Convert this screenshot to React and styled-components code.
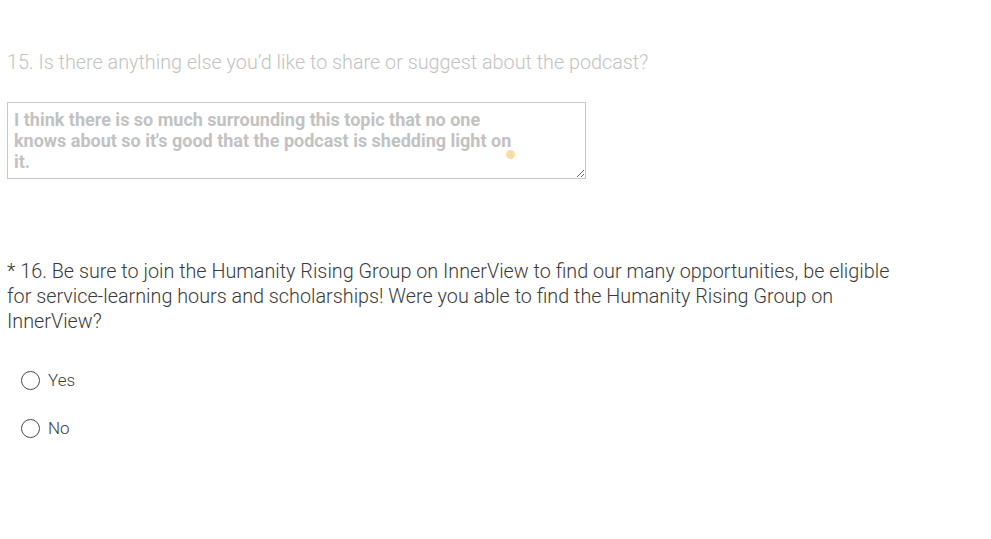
import React from 'react';
import styled, { createGlobalStyle } from 'styled-components';

const GlobalStyle = createGlobalStyle`
  html, body {
    margin: 0;
    padding: 0;
    background: #ffffff;
  }
  body {
    font-family: Roboto, "Liberation Sans", sans-serif;
  }
`;

const Page = styled.div`
  width: 991px;
  height: 539px;
  box-sizing: border-box;
  padding: 50px 0 0 7px;
  overflow: hidden;
`;

const Question = styled.div`
  margin-bottom: ${p => p.gap || 0}px;
`;

const Title = styled.div`
  font-size: 19.8px;
  font-weight: 300;
  line-height: 25px;
  color: ${p => (p.muted ? '#c3c3c3' : '#3b3b3b')};
  max-width: 900px;
  margin-bottom: ${p => p.below}px;
`;

const AnswerBox = styled.div`
  position: relative;
  width: 579px;
`;

const TextArea = styled.textarea`
  display: block;
  width: 579px;
  height: 77px;
  box-sizing: border-box;
  border: 1px solid #c9c9c9;
  border-radius: 0;
  padding: 6px 56px 0 6px;
  margin: 0;
  font-family: Roboto, "Liberation Sans", sans-serif;
  font-size: 18px;
  font-weight: 700;
  line-height: 21px;
  color: #c2c2c2;
  resize: vertical;
  background: #fff;
  outline: none;
  overflow: hidden;
`;

const Dot = styled.span`
  position: absolute;
  left: 499px;
  top: 48px;
  width: 9px;
  height: 9px;
  border-radius: 50%;
  background: #fcdca5;
`;

const Options = styled.div`
  display: flex;
  flex-direction: column;
  gap: 24px;
  padding-left: 14px;
`;

const Option = styled.label`
  display: flex;
  align-items: center;
  gap: 8px;
  height: 24px;
  font-size: 17px;
  font-weight: 300;
  color: #3b3b3b;
  cursor: pointer;
`;

const Circle = styled.span`
  width: 19px;
  height: 19px;
  border: 1.5px solid #4a4a4a;
  border-radius: 50%;
  box-sizing: border-box;
  flex: none;
`;

export default function App() {
  return (
    <>
      <GlobalStyle />
      <Page>
        <Question gap={80}>
          <Title muted below={27}>
            15. Is there anything else you’d like to share or suggest about the podcast?
          </Title>
          <AnswerBox>
            <TextArea
              readOnly
              defaultValue="I think there is so much surrounding this topic that no one knows about so it's good that the podcast is shedding light on it."
            />
            <Dot />
          </AnswerBox>
        </Question>
        <Question>
          <Title below={34}>
            * 16. Be sure to join the Humanity Rising Group on InnerView to find our many opportunities, be eligible
            for service-learning hours and scholarships! Were you able to find the Humanity Rising Group on
            InnerView?
          </Title>
          <Options>
            <Option>
              <Circle />
              Yes
            </Option>
            <Option>
              <Circle />
              No
            </Option>
          </Options>
        </Question>
      </Page>
    </>
  );
}
